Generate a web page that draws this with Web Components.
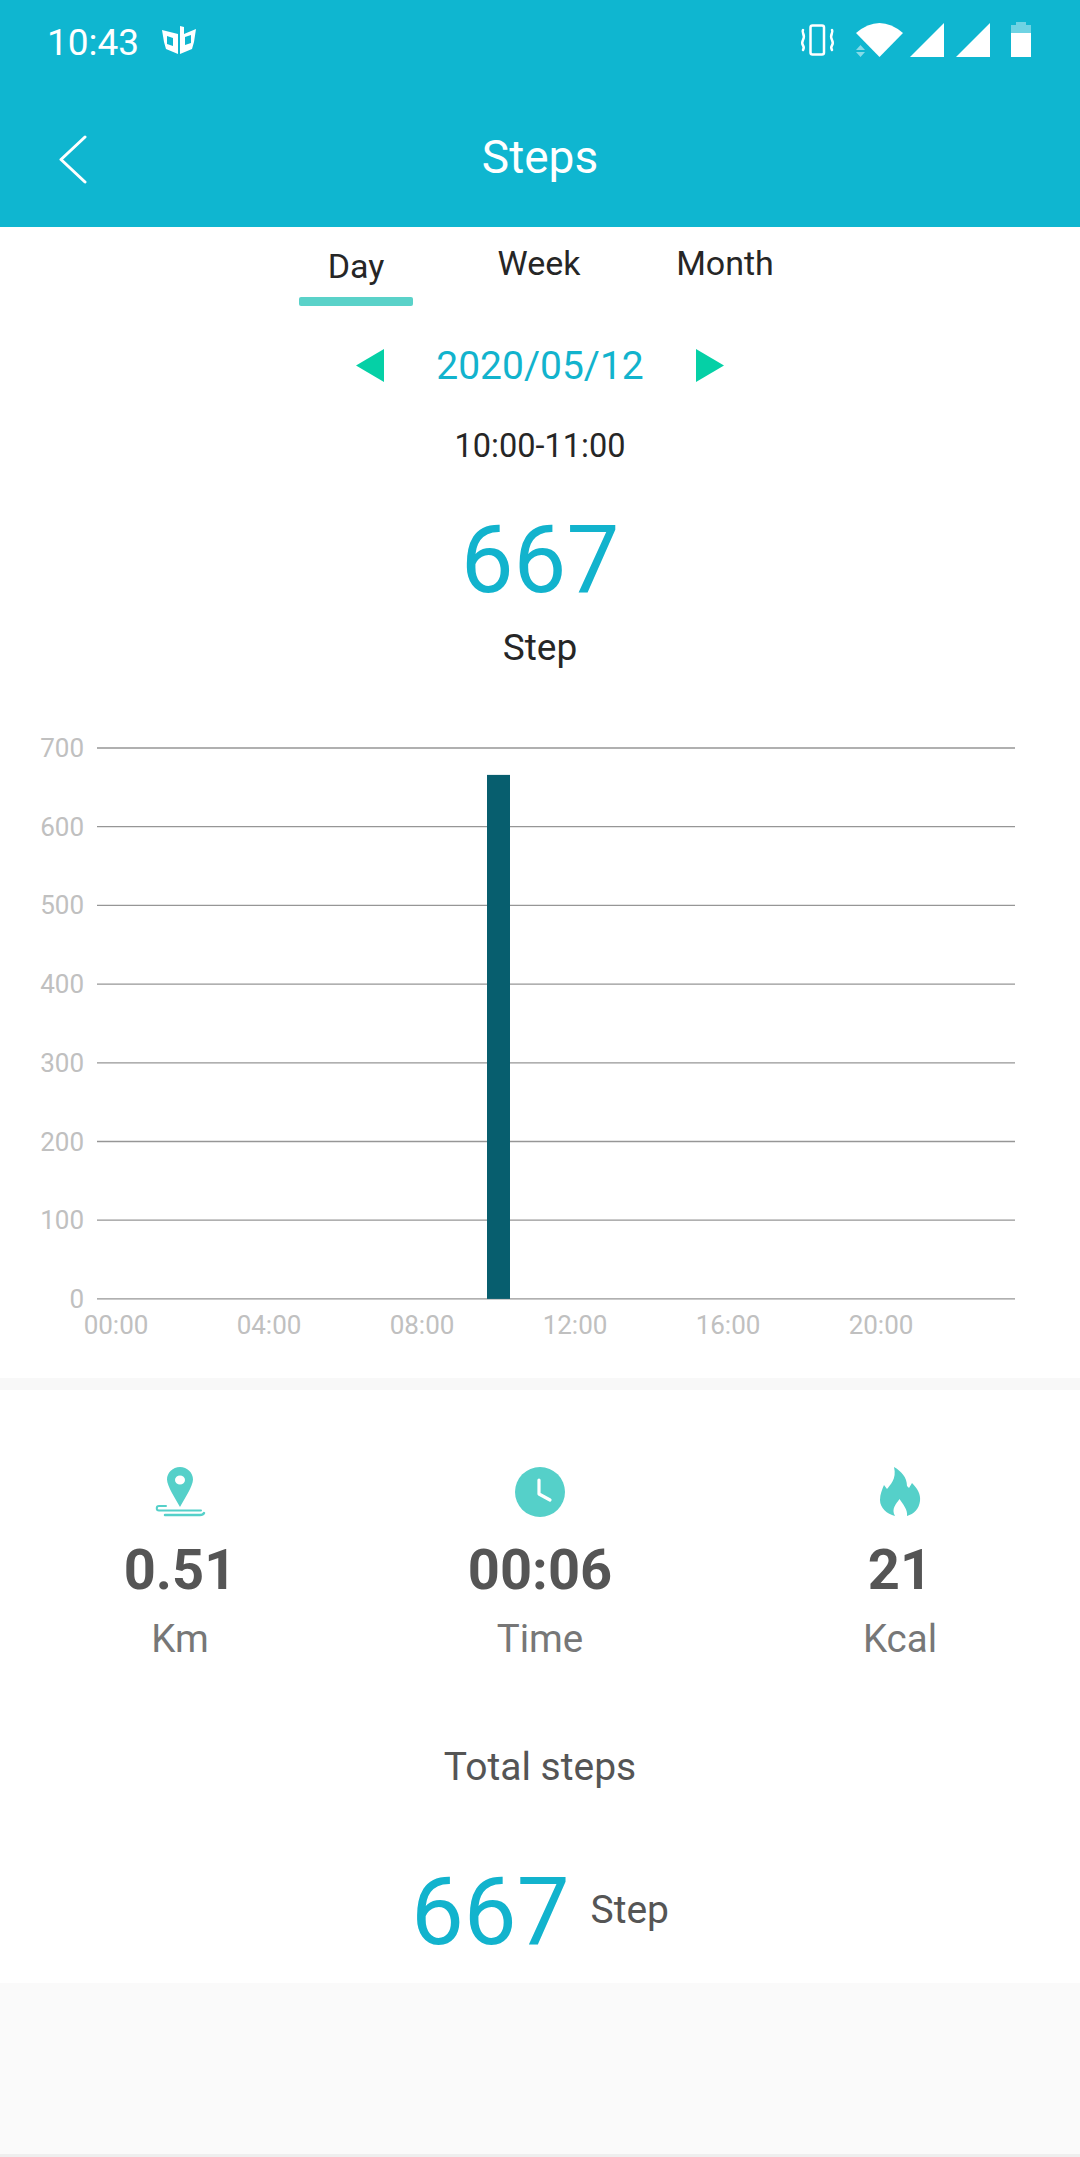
<!DOCTYPE html>
<html>
<head>
<meta charset="utf-8">
<title>Steps</title>
<style>
  html, body { margin: 0; padding: 0; background: #fafafa; }
  body { width: 1080px; height: 2157px; font-family: Roboto, "Liberation Sans", sans-serif; display: flex; flex-direction: column; overflow: hidden; }
</style>
</head>
<body>
<app-header title-text="Steps" time="10:43"></app-header>
<period-tabs></period-tabs>
<date-picker date="2020/05/12"></date-picker>
<step-summary range="10:00-11:00" value="667"></step-summary>
<step-chart></step-chart>
<stat-row>
  <stat-item value="0.51" unit="Km" icon="distance"></stat-item>
  <stat-item value="00:06" unit="Time" icon="clock"></stat-item>
  <stat-item value="21" unit="Kcal" icon="fire"></stat-item>
</stat-row>
<total-steps value="667"></total-steps>
<nav-edge></nav-edge>

<script>
const icons = {
  distance: `<svg width="52" height="52" viewBox="0 0 52 52">
    <path fill="#55d0c9" fill-rule="evenodd" d="M26 1C18.800 1 13 6.600 13 13.600 13 20 22 34 26 41 30 34 39 20 39 13.600 39 6.600 33.200 1 26 1zm0 8.500a5 4.500 0 1 1 0 9 5 4.500 0 0 1 0-9z"/>
    <path fill="none" stroke="#55d0c9" stroke-width="2" stroke-linecap="round" d="M12 40H5a2.200 2.200 0 0 0 0 4.500H47"/>
    <path fill="none" stroke="#55d0c9" stroke-width="2.500" stroke-linecap="round" d="M11 49H46q3 0 4-2"/>
  </svg>`,
  clock: `<svg width="52" height="52" viewBox="0 0 52 52">
    <circle cx="26" cy="26" r="25" fill="#55d0c9"/>
    <path fill="none" stroke="#fff" stroke-width="3.200" stroke-linecap="round" stroke-linejoin="round" d="M25 14v14l11 6"/>
  </svg>`,
  fire: `<svg width="44" height="52" viewBox="0 0 44 52">
    <path fill="#55d0c9" d="M16 1C23 5 29 11 29 20L31 22C32 20 33 19 34 17 39 22 43 28 42 35 41 43 36 48 29 50 30 44 25 38 21.500 33 18 38 13 43 17 50 9 48 2 42 2 34 2 28 4 24 6 19L9 23C12 19 19 13 16 1z"/>
  </svg>`
};

class AppHeader extends HTMLElement {
  connectedCallback() {
    this.attachShadow({mode: 'open'}).innerHTML = `
      <style>
        :host { display: block; background: #0fb6d0; color: #fff; height: 227px; flex: none; }
        .status { height: 84px; display: flex; align-items: center; justify-content: space-between; padding: 0 40px 0 47px; }
        .left { display: flex; align-items: center; gap: 22px; font-size: 37px; }
        .left svg { margin-top: -4px; }
        .bar { height: 143px; display: flex; align-items: center; justify-content: center; position: relative; font-size: 46px; padding-top: 2px; box-sizing: border-box; }
        .back { position: absolute; left: 58px; top: 51px; }
      </style>
      <div class="status">
        <div class="left">
          <span>${this.getAttribute('time')}</span>
          <svg width="36" height="28" viewBox="0 0 36 28"><path fill="#fff" fill-rule="evenodd" d="M1 4L17 8V28L5 23 3 16zM6 10v8l6 2v-8zM19 8V0L23 1V8L35 3 33 16 31 23 19 28zM24 11v8l6-2V9z"/></svg>
        </div>
        <svg width="240" height="44" viewBox="0 0 240 44">
          <g fill="none" stroke="#fff" stroke-width="2.500" stroke-linecap="round">
            <rect x="10.500" y="5.500" width="13.500" height="29" rx="2" ry="2"/>
            <path d="M3 10c-2 3 3 4 0 10s3 5 0 10"/>
            <path d="M32 10c2 3-3 4 0 10s-3 5 0 10"/>
          </g>
          <path fill="#fff" d="M56 13Q79.500-7 103 13L79.500 37z"/>
          <path fill="#fff" opacity=".5" d="M56 30l4.500-5 4.500 5zM56 32l4.500 5 4.500-5z"/>
          <path fill="#fff" d="M110 37L144 3V37zM156 37L190 3V37z"/>
          <path fill="#fff" opacity=".4" d="M211 5h5V2h10v3h5v9h-20z"/>
          <path fill="#fff" d="M211 13h20v24h-20z"/>
        </svg>
      </div>
      <div class="bar">
        <svg class="back" width="30" height="50" viewBox="0 0 30 50"><path fill="none" stroke="#fff" stroke-width="3" stroke-linecap="round" stroke-linejoin="round" d="M27 2L3 24.500 27 47"/></svg>
        ${this.getAttribute('title-text')}
      </div>`;
  }
}

class PeriodTabs extends HTMLElement {
  connectedCallback() {
    this.attachShadow({mode: 'open'}).innerHTML = `
      <style>
        :host { display: flex; padding-left: 299px; background: #fff; height: 99px; flex: none; font-size: 34px; color: #262626; }
        .tab { width: 130px; padding-top: 18px; text-align: center; box-sizing: border-box; line-height: 37px; }
        .on { width: 114px; padding-top: 21px; position: relative; margin-right: 61px; }
        .tab:last-child { margin-left: 56px; }
        .on::after { content: ""; position: absolute; left: 0; right: 0; top: 70px; height: 9px; background: #5ad2c9; border-radius: 2px; }
      </style>
      <div class="tab on">Day</div>
      <div class="tab">Week</div>
      <div class="tab">Month</div>`;
  }
}

class DatePicker extends HTMLElement {
  connectedCallback() {
    this.attachShadow({mode: 'open'}).innerHTML = `
      <style>
        :host { display: flex; justify-content: center; align-items: center; gap: 52px; background: #fff; height: 78px; flex: none; font-size: 39px; color: #12b3cd; }
        svg { display: block; }
        span { margin-top: 2px; }
      </style>
      <svg width="28" height="33" viewBox="0 0 28 33"><path fill="#05d0a6" d="M28 0v33L0 16.500z"/></svg>
      <span>${this.getAttribute('date')}</span>
      <svg width="28" height="33" viewBox="0 0 28 33"><path fill="#05d0a6" d="M0 0v33l28-16.500z"/></svg>`;
  }
}

class StepSummary extends HTMLElement {
  connectedCallback() {
    this.attachShadow({mode: 'open'}).innerHTML = `
      <style>
        :host { display: flex; flex-direction: column; align-items: center; background: #fff; height: 270px; flex: none; color: #262626; }
        .range { font-size: 32.500px; margin-top: 23px; line-height: 38px; }
        .num { font-size: 94px; color: #12b3cd; line-height: 112px; margin-top: 39px; }
        .unit { font-size: 37px; line-height: 41px; margin-top: 11px; }
      </style>
      <div class="range">${this.getAttribute('range')}</div>
      <div class="num">${this.getAttribute('value')}</div>
      <div class="unit">Step</div>`;
  }
}

class StepChart extends HTMLElement {
  connectedCallback() {
    // y axis 0-700 and the x hour labels, same scale as the app's chart
    const unit = 78.7, left = 97, right = 1015, y0 = 74;
    const base = y0 + 7 * unit;
    let svg = '';
    for (let i = 0; i <= 7; i++) {
      const y = y0 + (7 - i) * unit;
      svg += `<line x1="${left}" x2="${right}" y1="${y}" y2="${y}" stroke="#969696" stroke-width="1.300"/>`;
      svg += `<text x="84" y="${y + 9}" text-anchor="end" fill="#c0c0c0" font-size="26">${i * 100}</text>`;
    }
    ['00:00', '04:00', '08:00', '12:00', '16:00', '20:00'].forEach((t, i) => {
      svg += `<text x="${116 + i * 153}" y="${base + 35}" text-anchor="middle" fill="#c0c0c0" font-size="26">${t}</text>`;
    });
    svg += `<rect x="487" y="${base - 524}" width="23" height="524" fill="#075e6e"/>`;
    this.attachShadow({mode: 'open'}).innerHTML = `
      <style>
        :host { display: block; background: #fff; height: 704px; flex: none; }
        svg { display: block; font-family: Roboto, "Liberation Sans", sans-serif; }
      </style>
      <svg width="1080" height="704" viewBox="0 0 1080 704">${svg}</svg>`;
  }
}

class StatRow extends HTMLElement {
  connectedCallback() {
    this.attachShadow({mode: 'open'}).innerHTML = `
      <style>
        :host { display: grid; grid-template-columns: repeat(3, 360px); background: #fff; height: 329px; flex: none; border-top: 12px solid #f8f8f8; padding-top: 76px; box-sizing: border-box; align-content: start; }
      </style>
      <slot></slot>`;
  }
}

class StatItem extends HTMLElement {
  connectedCallback() {
    this.attachShadow({mode: 'open'}).innerHTML = `
      <style>
        :host { display: flex; flex-direction: column; align-items: center; }
        .ic { height: 52px; }
        .ic svg { display: block; }
        .val { font-size: 56px; font-weight: 700; color: #555; line-height: 61px; margin-top: 22px; }
        .unit { font-size: 38.500px; color: #777; line-height: 44px; margin-top: 16px; }
      </style>
      <div class="ic">${icons[this.getAttribute('icon')]}</div>
      <div class="val">${this.getAttribute('value')}</div>
      <div class="unit">${this.getAttribute('unit')}</div>`;
  }
}

class TotalSteps extends HTMLElement {
  connectedCallback() {
    this.attachShadow({mode: 'open'}).innerHTML = `
      <style>
        :host { display: flex; flex-direction: column; align-items: center; background: #fff; height: 276px; flex: none; color: #555; }
        .label { font-size: 39px; line-height: 42px; margin-top: 39px; }
        .line { display: flex; align-items: center; gap: 21px; margin-top: 68px; }
        .num { font-size: 94px; color: #12b3cd; line-height: 112px; }
        .unit { font-size: 39px; padding-bottom: 5px; }
      </style>
      <div class="label">Total steps</div>
      <div class="line"><span class="num">${this.getAttribute('value')}</span><span class="unit">Step</span></div>`;
  }
}

class NavEdge extends HTMLElement {
  connectedCallback() {
    this.attachShadow({mode: 'open'}).innerHTML = `
      <style>
        :host { display: block; margin-top: auto; height: 3px; background: #eeeeee; }
      </style>`;
  }
}

customElements.define('app-header', AppHeader);
customElements.define('period-tabs', PeriodTabs);
customElements.define('date-picker', DatePicker);
customElements.define('step-summary', StepSummary);
customElements.define('step-chart', StepChart);
customElements.define('stat-row', StatRow);
customElements.define('stat-item', StatItem);
customElements.define('total-steps', TotalSteps);
customElements.define('nav-edge', NavEdge);
</script>
</body>
</html>
